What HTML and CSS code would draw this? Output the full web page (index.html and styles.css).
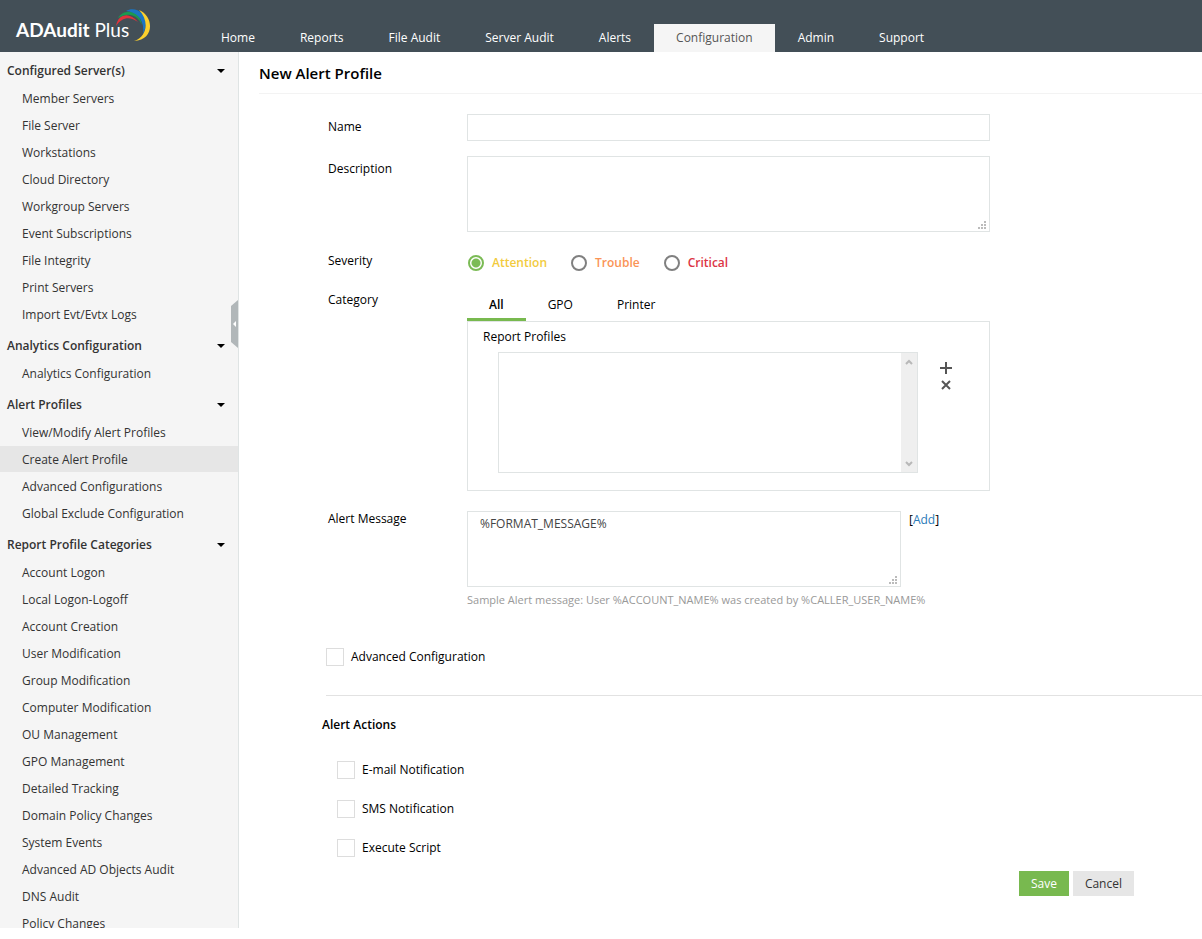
FILE: index.html
```html
<!DOCTYPE html>
<html lang="en">
<head>
    <meta charset="UTF-8">
    <meta name="viewport" content="width=device-width, initial-scale=1.0">
    <title>ADAudit Plus - New Alert Profile</title>
    <link rel="stylesheet" href="styles.css">
</head>
<body>
    <header class="topbar">
        <a href="#" class="logo">
            <b>ADAudit</b> Plus
            <svg class="logo-arcs" width="36" height="34" viewBox="0 0 36 34">
                <path fill="#e0333c" d="M1 18C3 6 14 3 23 14C15 8 7 9 1 18Z"/>
                <path fill="#1a9a50" d="M3 10C9 0 25 2 27 17C22 6 13 4 3 10Z"/>
                <path fill="#1b75c4" d="M11 3C22-3 37 8 28 26C30 12 22 4 11 3Z"/>
                <path fill="#fbd02d" d="M24 2C39 8 40 32 19 33C33 28 34 12 24 2Z"/>
            </svg>
        </a>
        <nav class="main-nav">
            <a href="#">Home</a>
            <a href="#">Reports</a>
            <a href="#">File Audit</a>
            <a href="#">Server Audit</a>
            <a href="#">Alerts</a>
            <a href="#" class="active">Configuration</a>
            <a href="#">Admin</a>
            <a href="#">Support</a>
        </nav>
    </header>

    <div class="page">
        <aside class="sidebar">
            <div class="sidebar-scroll">
                <h3>Configured Server(s)</h3>
                <ul>
                    <li><a href="#">Member Servers</a></li>
                    <li><a href="#">File Server</a></li>
                    <li><a href="#">Workstations</a></li>
                    <li><a href="#">Cloud Directory</a></li>
                    <li><a href="#">Workgroup Servers</a></li>
                    <li><a href="#">Event Subscriptions</a></li>
                    <li><a href="#">File Integrity</a></li>
                    <li><a href="#">Print Servers</a></li>
                    <li><a href="#">Import Evt/Evtx Logs</a></li>
                </ul>
                <h3>Analytics Configuration</h3>
                <ul>
                    <li><a href="#">Analytics Configuration</a></li>
                </ul>
                <h3>Alert Profiles</h3>
                <ul>
                    <li><a href="#">View/Modify Alert Profiles</a></li>
                    <li><a href="#" class="selected">Create Alert Profile</a></li>
                    <li><a href="#">Advanced Configurations</a></li>
                    <li><a href="#">Global Exclude Configuration</a></li>
                </ul>
                <h3>Report Profile Categories</h3>
                <ul>
                    <li><a href="#">Account Logon</a></li>
                    <li><a href="#">Local Logon-Logoff</a></li>
                    <li><a href="#">Account Creation</a></li>
                    <li><a href="#">User Modification</a></li>
                    <li><a href="#">Group Modification</a></li>
                    <li><a href="#">Computer Modification</a></li>
                    <li><a href="#">OU Management</a></li>
                    <li><a href="#">GPO Management</a></li>
                    <li><a href="#">Detailed Tracking</a></li>
                    <li><a href="#">Domain Policy Changes</a></li>
                    <li><a href="#">System Events</a></li>
                    <li><a href="#">Advanced AD Objects Audit</a></li>
                    <li><a href="#">DNS Audit</a></li>
                    <li><a href="#">Policy Changes</a></li>
                </ul>
            </div>
            <button type="button" class="collapse" aria-label="Collapse menu">
                <svg width="7" height="48" viewBox="0 0 7 48">
                    <path fill="#b1b7b9" d="M7 0V48L0 42V6Z"/>
                    <path fill="#fff" d="M5 21V27L2 24Z"/>
                </svg>
            </button>
        </aside>

        <main class="content">
            <h1>New Alert Profile</h1>
            <form>
                <div class="form-row">
                    <label for="name">Name</label>
                    <input type="text" id="name" name="name">
                </div>
                <div class="form-row">
                    <label for="description">Description</label>
                    <div class="textarea-box">
                        <textarea id="description" name="description"></textarea>
                        <svg class="grip" width="8" height="8" viewBox="0 0 8 8"><path d="M6 0h2v2H6zM3 3h2v2H3zM6 3h2v2H6zM0 6h2v2H0zM3 6h2v2H3zM6 6h2v2H6z"/></svg>
                    </div>
                </div>
                <div class="form-row severity-row">
                    <span class="label">Severity</span>
                    <div class="severity">
                        <label class="attention"><input type="radio" name="severity" checked>Attention</label>
                        <label class="trouble"><input type="radio" name="severity">Trouble</label>
                        <label class="critical"><input type="radio" name="severity">Critical</label>
                    </div>
                </div>
                <div class="form-row category-row">
                    <span class="label">Category</span>
                    <div class="category">
                        <div class="tabs">
                            <button type="button" class="active">All</button>
                            <button type="button">GPO</button>
                            <button type="button">Printer</button>
                        </div>
                        <div class="panel">
                            <label for="profiles">Report Profiles</label>
                            <div class="profiles">
                                <div class="list-box">
                                    <select id="profiles" multiple></select>
                                    <div class="scrollbar">
                                        <svg width="8" height="6" viewBox="0 0 8 6"><path d="M1 5L4 2L7 5"/></svg>
                                        <svg width="8" height="6" viewBox="0 0 8 6"><path d="M1 1L4 4L7 1"/></svg>
                                    </div>
                                </div>
                                <div class="list-actions">
                                    <button type="button" aria-label="Add profile">
                                        <svg width="12" height="12" viewBox="0 0 12 12"><path d="M6 0V12M0 6H12"/></svg>
                                    </button>
                                    <button type="button" aria-label="Remove profile">
                                        <svg width="12" height="12" viewBox="0 0 12 12"><path d="M2 2L10 10M10 2L2 10"/></svg>
                                    </button>
                                </div>
                            </div>
                        </div>
                    </div>
                </div>
                <div class="form-row message-row">
                    <label for="message">Alert Message</label>
                    <div>
                        <div class="message">
                            <div class="textarea-box">
                                <textarea id="message" name="message">%FORMAT_MESSAGE%</textarea>
                                <svg class="grip" width="8" height="8" viewBox="0 0 8 8"><path d="M6 0h2v2H6zM3 3h2v2H3zM6 3h2v2H6zM0 6h2v2H0zM3 6h2v2H3zM6 6h2v2H6z"/></svg>
                            </div>
                            <span class="add">[<a href="#">Add</a>]</span>
                        </div>
                        <p class="hint">Sample Alert message: User %ACCOUNT_NAME% was created by %CALLER_USER_NAME%</p>
                    </div>
                </div>

                <div class="advanced">
                    <label class="check"><input type="checkbox" name="advanced">Advanced Configuration</label>
                </div>

                <section class="actions">
                    <h2>Alert Actions</h2>
                    <label class="check"><input type="checkbox" name="email">E-mail Notification</label>
                    <label class="check"><input type="checkbox" name="sms">SMS Notification</label>
                    <label class="check"><input type="checkbox" name="script">Execute Script</label>
                </section>

                <div class="buttons">
                    <button type="submit" class="save">Save</button>
                    <button type="button" class="cancel">Cancel</button>
                </div>
            </form>
        </main>
    </div>
</body>
</html>
```
FILE: styles.css
```css
* {
    box-sizing: border-box;
}

body {
    display: flex;
    flex-direction: column;
    height: 100vh;
    margin: 0;
    padding-bottom: 11px;
    font-family: "Open Sans", sans-serif;
    font-size: 12px;
    line-height: 16px;
    color: #000;
    background-color: #fff;
}

a {
    text-decoration: none;
}

button, input, textarea, select {
    margin: 0;
    font-family: inherit;
    font-size: inherit;
}

button {
    padding: 0;
    border: none;
    background: none;
    cursor: pointer;
}

svg {
    display: block;
}

/* top bar */
.topbar {
    display: flex;
    flex: none;
    align-items: flex-end;
    height: 52px;
    background-color: #434f57;
}

.logo {
    position: relative;
    width: 199px;
    padding: 0 0 10px 16px;
    font-family: Lato, sans-serif;
    font-size: 19px;
    line-height: 24px;
    color: #fff;
}

.logo-arcs {
    position: absolute;
    left: 115px;
    bottom: 10px;
}

.main-nav {
    display: flex;
    gap: 1px;
}

.main-nav a {
    padding: 0 22px;
    line-height: 28px;
    color: #fff;
}

.main-nav a.active {
    color: #555;
    background-color: #f5f5f5;
}

/* sidebar */
.page {
    display: flex;
    flex: 1;
    min-height: 0;
}

.sidebar {
    position: relative;
    flex: none;
    width: 239px;
    border-right: 1px solid #dfe4e4;
    background-color: #f5f5f5;
}

.sidebar-scroll {
    height: 100%;
    padding-top: 1px;
    overflow: hidden;
}

.sidebar h3 {
    display: flex;
    justify-content: space-between;
    align-items: center;
    margin: 0;
    padding: 4px 13px 0 7px;
    font-size: 12px;
    font-weight: 600;
    line-height: 28px;
    color: #333;
}

.sidebar h3::after {
    content: "";
    border: 4px solid transparent;
    border-top-color: #000;
    border-bottom: none;
}

.sidebar ul {
    margin: 0;
    padding: 0;
    list-style: none;
}

.sidebar li a {
    display: block;
    margin-bottom: 1px;
    padding: 2px 0 0 22px;
    line-height: 24px;
    color: #333;
}

.sidebar li a.selected {
    background-color: #e6e6e6;
}

.collapse {
    position: absolute;
    top: 248px;
    right: 0;
}

/* form */
.content {
    flex: 1;
    min-width: 0;
    padding-left: 20px;
}

h1 {
    margin: 0 0 20px;
    padding: 11px 0 9px;
    border-bottom: 1px solid #f3f3f3;
    font-size: 15px;
    font-weight: 600;
    line-height: 21px;
}

.form-row {
    display: grid;
    grid-template-columns: 139px minmax(0, 523px);
    align-items: start;
    margin: 0 20px 15px 69px;
}

.form-row > label,
.form-row > .label {
    padding-top: 5px;
}

.form-row input[type="text"],
textarea {
    display: block;
    width: 100%;
    height: 27px;
    padding: 4px 12px;
    border: 1px solid #e0e4e4;
    border-radius: 0;
    outline: none;
    color: #444;
    background-color: #fff;
}

.textarea-box {
    position: relative;
    flex: 1;
}

textarea {
    height: 76px;
    line-height: 16px;
    resize: none;
}

.grip {
    position: absolute;
    right: 4px;
    bottom: 3px;
    fill: #bbb;
}

.severity-row {
    margin-top: 16px;
    margin-bottom: 9px;
}

.severity {
    display: flex;
    gap: 24px;
    padding-left: 1px;
}

.severity label {
    display: flex;
    align-items: center;
    gap: 8px;
    font-weight: 600;
    line-height: 30px;
}

.severity input {
    appearance: none;
    width: 16px;
    height: 16px;
    border: 2px solid #808080;
    border-radius: 50%;
}

.severity input:checked {
    border-color: #7bbb55;
    background: radial-gradient(circle, #7bbb55 4px, #fff 5px);
}

.attention {
    color: #f2cb3d;
}

.trouble {
    color: #fa9456;
}

.critical {
    color: #dc3545;
}

.category-row {
    margin-bottom: 20px;
}

.tabs {
    display: flex;
}

.tabs button {
    height: 34px;
    padding: 3px 22px 0;
    border-bottom: 3px solid transparent;
}

.tabs .active {
    border-color: #78b94f;
    font-weight: 600;
}

.panel {
    padding: 7px 15px 17px;
    border: 1px solid #e0e4e4;
}

.panel label {
    display: block;
}

.profiles {
    display: flex;
    gap: 22px;
    padding: 7px 22px 0 15px;
}

.list-box {
    display: flex;
    flex: 1;
    height: 121px;
    border: 1px solid #e0e4e4;
}

.list-box select {
    flex: 1;
    min-width: 0;
    padding: 0;
    border: none;
    outline: none;
    background-color: #fff;
    overflow: hidden;
}

.scrollbar {
    display: flex;
    flex-direction: column;
    justify-content: space-between;
    align-items: center;
    width: 16px;
    padding: 6px 0 5px;
    background-color: #efefef;
}

.scrollbar path {
    fill: none;
    stroke: #b8b8b8;
    stroke-width: 2;
}

.list-actions {
    display: flex;
    flex-direction: column;
    gap: 5px;
    padding-top: 10px;
}

.list-actions path {
    stroke: #555;
    stroke-width: 2;
}

.message-row > label {
    padding-top: 0;
}

.message {
    display: flex;
    gap: 8px;
    padding-right: 51px;
}

.add {
    flex: none;
    width: 30px;
    padding-top: 1px;
}

.add a {
    color: #2a7ab8;
}

.hint {
    margin: 5px 0 0;
    font-size: 11px;
    color: #999;
}

.check {
    display: flex;
    align-items: center;
    gap: 7px;
    width: fit-content;
    line-height: 18px;
}

.check input {
    appearance: none;
    width: 18px;
    height: 18px;
    border: 1px solid #ddd;
    background-color: #fff;
}

.advanced {
    margin-left: 67px;
    padding: 25px 0 29px;
    border-bottom: 1px solid #e2e2e2;
}

.actions {
    display: grid;
    gap: 21px;
    margin-left: 78px;
}

.actions h2 {
    margin: 21px 0 7px -15px;
    font-size: 12px;
    font-weight: 600;
}

.buttons {
    display: flex;
    justify-content: flex-end;
    gap: 4px;
    padding: 14px 68px 0 0;
}

.buttons button {
    height: 25px;
    padding: 0 12px;
}

.buttons .save {
    color: #fff;
    background-color: #78b94f;
}

.buttons .cancel {
    color: #333;
    background-color: #e6e6e6;
}
```
